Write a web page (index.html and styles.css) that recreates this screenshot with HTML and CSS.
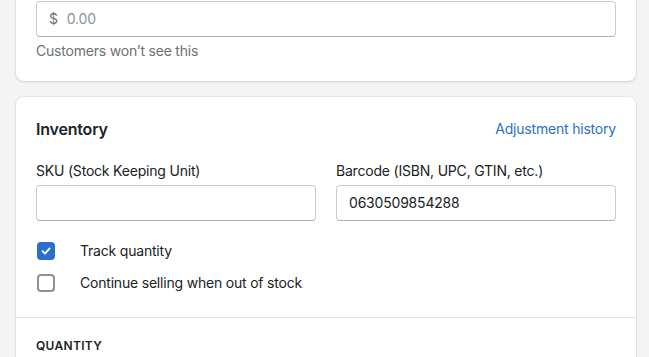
FILE: index.html
```html
<!DOCTYPE html>
<html lang="en">
<head>
    <meta charset="UTF-8">
    <meta name="viewport" content="width=device-width, initial-scale=1.0">
    <title>Product</title>
    <link rel="stylesheet" href="styles.css">
</head>
<body>
    <div class="page">
        <!-- Cost card (scrolled, only the bottom shows) -->
        <div class="card card-cut">
            <div class="field-input">
                <span class="prefix">$</span>
                <span class="placeholder">0.00</span>
            </div>
            <p class="help">Customers won’t see this</p>
        </div>

        <!-- Inventory card -->
        <div class="card">
            <div class="section">
                <div class="card-header">
                    <h2>Inventory</h2>
                    <a href="#" class="link">Adjustment history</a>
                </div>
                <div class="field-row">
                    <div class="field">
                        <label>SKU (Stock Keeping Unit)</label>
                        <div class="field-input"></div>
                    </div>
                    <div class="field">
                        <label>Barcode (ISBN, UPC, GTIN, etc.)</label>
                        <div class="field-input"><span class="value">0630509854288</span></div>
                    </div>
                </div>
                <div class="checks">
                    <div class="check">
                        <span class="box checked">
                            <svg width="12" height="12" viewBox="0 0 12 12"><path d="M2.5 6.2 L5 8.6 L9.6 3.4" fill="none" stroke="#fff" stroke-width="1.8" stroke-linecap="round" stroke-linejoin="round"/></svg>
                        </span>
                        <span>Track quantity</span>
                    </div>
                    <div class="check">
                        <span class="box"></span>
                        <span>Continue selling when out of stock</span>
                    </div>
                </div>
            </div>
            <div class="section section-sub">
                <h3>Quantity</h3>
            </div>
        </div>
    </div>
</body>
</html>
```

FILE: styles.css
```css
/* Page base */
body {
    margin: 0;
    background: #f4f4f4;
    font-family: Inter, "Noto Sans", sans-serif;
    font-size: 14px;
    line-height: 20px;
    letter-spacing: -0.2px;
    color: #202223;
    height: 357px;
    overflow: hidden;
}

.page {
    padding: 0 13px 0 16px;
    display: flex;
    flex-direction: column;
    gap: 16px;
}

/* Cards */
.card {
    background: #fff;
    border-radius: 8px;
    box-shadow: 0 0 0 1px rgba(63, 63, 68, 0.05), 0 1px 3px rgba(63, 63, 68, 0.15);
}

.card-cut {
    border-radius: 0 0 8px 8px;
    padding: 1px 20px 20px;
}

.section {
    padding: 20px 20px 24px;
}

.section-sub {
    border-top: 1px solid #e1e3e5;
    padding-top: 20px;
}

.card-header {
    display: flex;
    justify-content: space-between;
    align-items: center;
    margin-bottom: 20px;
}

h2 {
    margin: 0;
    font-size: 16px;
    line-height: 24px;
    font-weight: 600;
}

h3 {
    margin: 0;
    font-size: 12px;
    line-height: 16px;
    font-weight: 600;
    text-transform: uppercase;
    letter-spacing: 0.3px;
}

.link {
    color: #2c6ecb;
    text-decoration: none;
}

/* Fields */
.field-row {
    display: flex;
    gap: 20px;
}

.field {
    flex: 1;
}

.field label {
    display: block;
    margin-bottom: 4px;
}

.field-input {
    height: 34px;
    border: 1px solid #c9cccf;
    border-bottom-color: #aeb4b9;
    border-radius: 4px;
    display: flex;
    align-items: center;
    padding: 0 12px;
    gap: 9px;
}

.prefix {
    color: #6d7175;
}

.placeholder {
    color: #8c9196;
}

.help {
    margin: 4px 0 0;
    color: #6d7175;
}

/* Checkboxes */
.checks {
    margin-top: 20px;
    display: flex;
    flex-direction: column;
    gap: 12px;
}

.check {
    display: flex;
    align-items: center;
    gap: 25px;
    padding-left: 1px;
}

.box {
    width: 14px;
    height: 14px;
    border: 2px solid #8c9196;
    border-radius: 4px;
    display: flex;
    align-items: center;
    justify-content: center;
}

.box.checked {
    background: #2c6ecb;
    border-color: #2c6ecb;
}
```
